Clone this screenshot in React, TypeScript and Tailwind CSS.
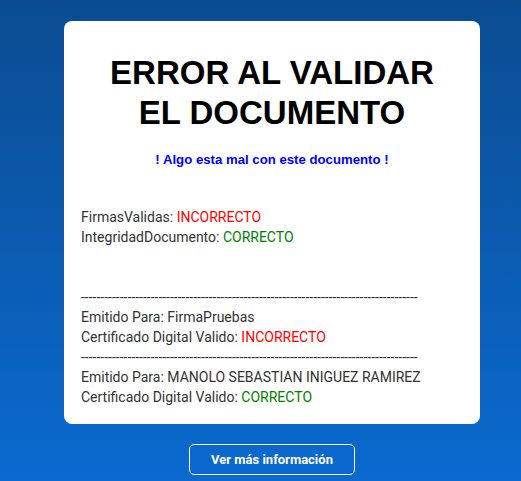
import React from "react";

const DASHES = "-".repeat(87);

const Estado: React.FC<{ ok: boolean }> = ({ ok }) => (
  <span className={ok ? "text-[#008000]" : "text-[#ff0000]"}>
    {ok ? "CORRECTO" : "INCORRECTO"}
  </span>
);

const certificados = [
  { nombre: "FirmaPruebas", ok: false },
  { nombre: "MANOLO SEBASTIAN INIGUEZ RAMIREZ", ok: true },
];

export default function App() {
  return (
    <div className="min-h-[481px] bg-gradient-to-b from-[#0b4c91] to-[#0a6ad0] pl-[23px] pt-[21px] pb-[6px] flex flex-col items-center">
      <div className="w-[416px] bg-white rounded-lg px-[17px] pt-[32px] pb-[17px]">
        <h1 className="text-center font-bold text-[33px] leading-[40px] text-black font-['Liberation_Sans',Arial,sans-serif]">
          ERROR AL VALIDAR
          <br />
          EL DOCUMENTO
        </h1>
        <p className="mt-[17px] text-center font-bold text-[13.2px] leading-5 text-[#0000ff] font-['Liberation_Sans',Arial,sans-serif]">
          ! Algo esta mal con este documento !
        </p>
        <div className="mt-[37px] text-[14px] leading-5 text-[#333333] font-['Roboto',sans-serif]">
          <p>
            FirmasValidas: <Estado ok={false} />
          </p>
          <p>
            IntegridadDocumento: <Estado ok={true} />
          </p>
          <br />
          <br />
          {certificados.map((c) => (
            <div key={c.nombre}>
              <p className="whitespace-nowrap overflow-hidden">{DASHES}</p>
              <p>Emitido Para: {c.nombre}</p>
              <p>
                Certificado Digital Valido: <Estado ok={c.ok} />
              </p>
            </div>
          ))}
        </div>
      </div>
      <button className="mt-5 w-[166px] h-[31px] border border-white rounded-[5px] text-white font-bold text-[13px] font-['Roboto',sans-serif]">
        Ver más información
      </button>
    </div>
  );
}
